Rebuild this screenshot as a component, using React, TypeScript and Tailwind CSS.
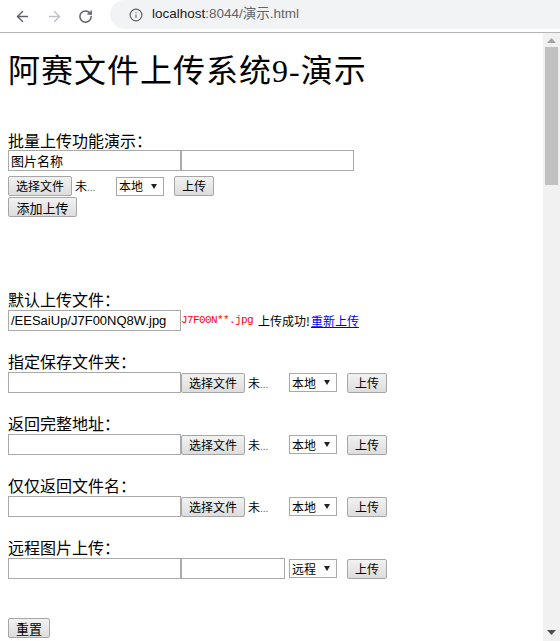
import { ArrowLeft, ArrowRight, RotateCw, Info } from "lucide-react";
import type { ReactNode } from "react";

const cjk = "font-['Noto_Sans_CJK_SC',sans-serif]";

function Btn({ children, className = "" }: { children: ReactNode; className?: string }) {
  return (
    <button
      className={`flex h-[20px] shrink-0 items-center justify-center rounded-[2px] border border-[#a6a6a6] bg-linear-to-b from-[#f2f2f2] to-[#dddddd] text-[12px] leading-none text-black ${className}`}
    >
      {children}
    </button>
  );
}

function TextBox({ className = "w-[173px]", value }: { className?: string; value?: string }) {
  return (
    <div
      className={`flex h-[21px] shrink-0 items-center overflow-hidden whitespace-nowrap border border-[#a9a9a9] bg-white pl-[2px] text-[13px] leading-none text-black ${className}`}
    >
      {value}
    </div>
  );
}

function Select({ label }: { label: string }) {
  return (
    <div className="ml-[4px] flex h-[19px] w-[48px] shrink-0 items-center justify-between border border-[#a9a9a9] bg-white pl-[2px] pr-[6px] text-[12px] leading-none">
      <span>{label}</span>
      <svg width="6" height="5" viewBox="0 0 6 5">
        <path d="M0 0H6L3 5Z" fill="#222" />
      </svg>
    </div>
  );
}

function FilePicker() {
  return (
    <div className="flex w-[104px] shrink-0 items-center">
      <Btn className="w-[64px]">选择文件</Btn>
      <span className="ml-[3px] text-[12px] leading-none">
        未<span className="text-[10px] text-[#6b6b6b]">...</span>
      </span>
    </div>
  );
}

function Label({ children, className = "mt-[20px]" }: { children: ReactNode; className?: string }) {
  return <div className={`h-[20px] text-[16px] leading-[20px] ${className}`}>{children}</div>;
}

function UploadRow() {
  return (
    <div className="mt-[1px] flex h-[21px] items-center">
      <TextBox />
      <FilePicker />
      <Select label="本地" />
      <Btn className="ml-[10px] w-[40px]">上传</Btn>
    </div>
  );
}

export default function App() {
  return (
    <div className={`flex h-[641px] w-[560px] flex-col overflow-hidden bg-white text-black ${cjk}`}>
      <header className="flex h-[33px] shrink-0 items-center border-b border-[#b6b6b6] bg-white">
        <div className="flex h-[32px] items-center">
          <ArrowLeft className="ml-[14px] text-[#5f6368]" size={17} strokeWidth={2} />
          <ArrowRight className="ml-[15px] text-[#bdc1c6]" size={17} strokeWidth={2} />
          <RotateCw className="ml-[15px] text-[#5f6368]" size={15} strokeWidth={2.4} />
        </div>
        <div className="ml-[17px] flex h-[29px] flex-1 items-center self-start rounded-l-full bg-[#f1f3f4] pl-[19px]">
          <Info className="text-[#5f6368]" size={14} strokeWidth={2} />
          <span className="ml-[9px] font-['Liberation_Sans','Noto_Sans_CJK_SC',sans-serif] text-[13.5px] text-[#5f6368]">
            <span className="text-[#202124]">localhost</span>:8044/演示.html
          </span>
        </div>
      </header>

      <div className="flex flex-1">
        <main className="flex flex-1 flex-col px-[8px]">
          <h1 className="mt-[20px] h-[37px] font-['Liberation_Serif','Noto_Sans_CJK_SC',serif] text-[32px] font-normal leading-[37px] tracking-[1px]">
            阿赛文件上传系统9-演示
          </h1>

          <Label className="mt-[40px]">批量上传功能演示：</Label>
          <div className="flex h-[21px] items-center">
            <TextBox value="图片名称" />
            <TextBox />
          </div>
          <div className="mt-[5px] flex h-[20px] items-center">
            <FilePicker />
            <Select label="本地" />
            <Btn className="ml-[10px] w-[40px]">上传</Btn>
          </div>
          <div className="mt-[1px] flex">
            <Btn className="w-[69px] text-[13px]">添加上传</Btn>
          </div>

          <Label className="mt-[72px]">默认上传文件：</Label>
          <div className="mt-[1px] flex h-[21px] items-center whitespace-nowrap">
            <TextBox
              className="w-[173px] font-['Liberation_Sans',sans-serif] text-[#1b1b2e]"
              value="/EESaiUp/J7F00NQ8W.jpg"
            />
            <span className="font-['Liberation_Mono',monospace] text-[11px] tracking-[-0.6px] text-[#ff0000]">
              J7F00N**.jpg
            </span>
            <span className="ml-[5px] text-[12px]">上传成功!</span>
            <a href="#" className="ml-[1px] text-[12px] text-[#0000ee] underline">
              重新上传
            </a>
          </div>

          <Label>指定保存文件夹：</Label>
          <UploadRow />

          <Label>返回完整地址：</Label>
          <UploadRow />

          <Label>仅仅返回文件名：</Label>
          <UploadRow />

          <Label>远程图片上传：</Label>
          <div className="mt-[1px] flex h-[21px] items-center">
            <TextBox />
            <TextBox className="w-[104px]" />
            <Select label="远程" />
            <Btn className="ml-[10px] w-[40px]">上传</Btn>
          </div>

          <div className="mt-[39px] flex">
            <Btn className="w-[42px] text-[13px]">重置</Btn>
          </div>
        </main>

        <aside className="flex w-[17px] shrink-0 flex-col items-center bg-[#f1f1f1]">
          <svg className="mt-[5px]" width="9" height="5" viewBox="0 0 9 5">
            <path d="M0 5L4.5 0L9 5Z" fill="#a3a3a3" />
          </svg>
          <div className="mt-[4px] h-[138px] w-[13px] bg-[#c1c1c1]" />
          <div className="flex-1" />
          <svg className="mb-[6px]" width="9" height="5" viewBox="0 0 9 5">
            <path d="M0 0H9L4.5 5Z" fill="#505050" />
          </svg>
        </aside>
      </div>
    </div>
  );
}
